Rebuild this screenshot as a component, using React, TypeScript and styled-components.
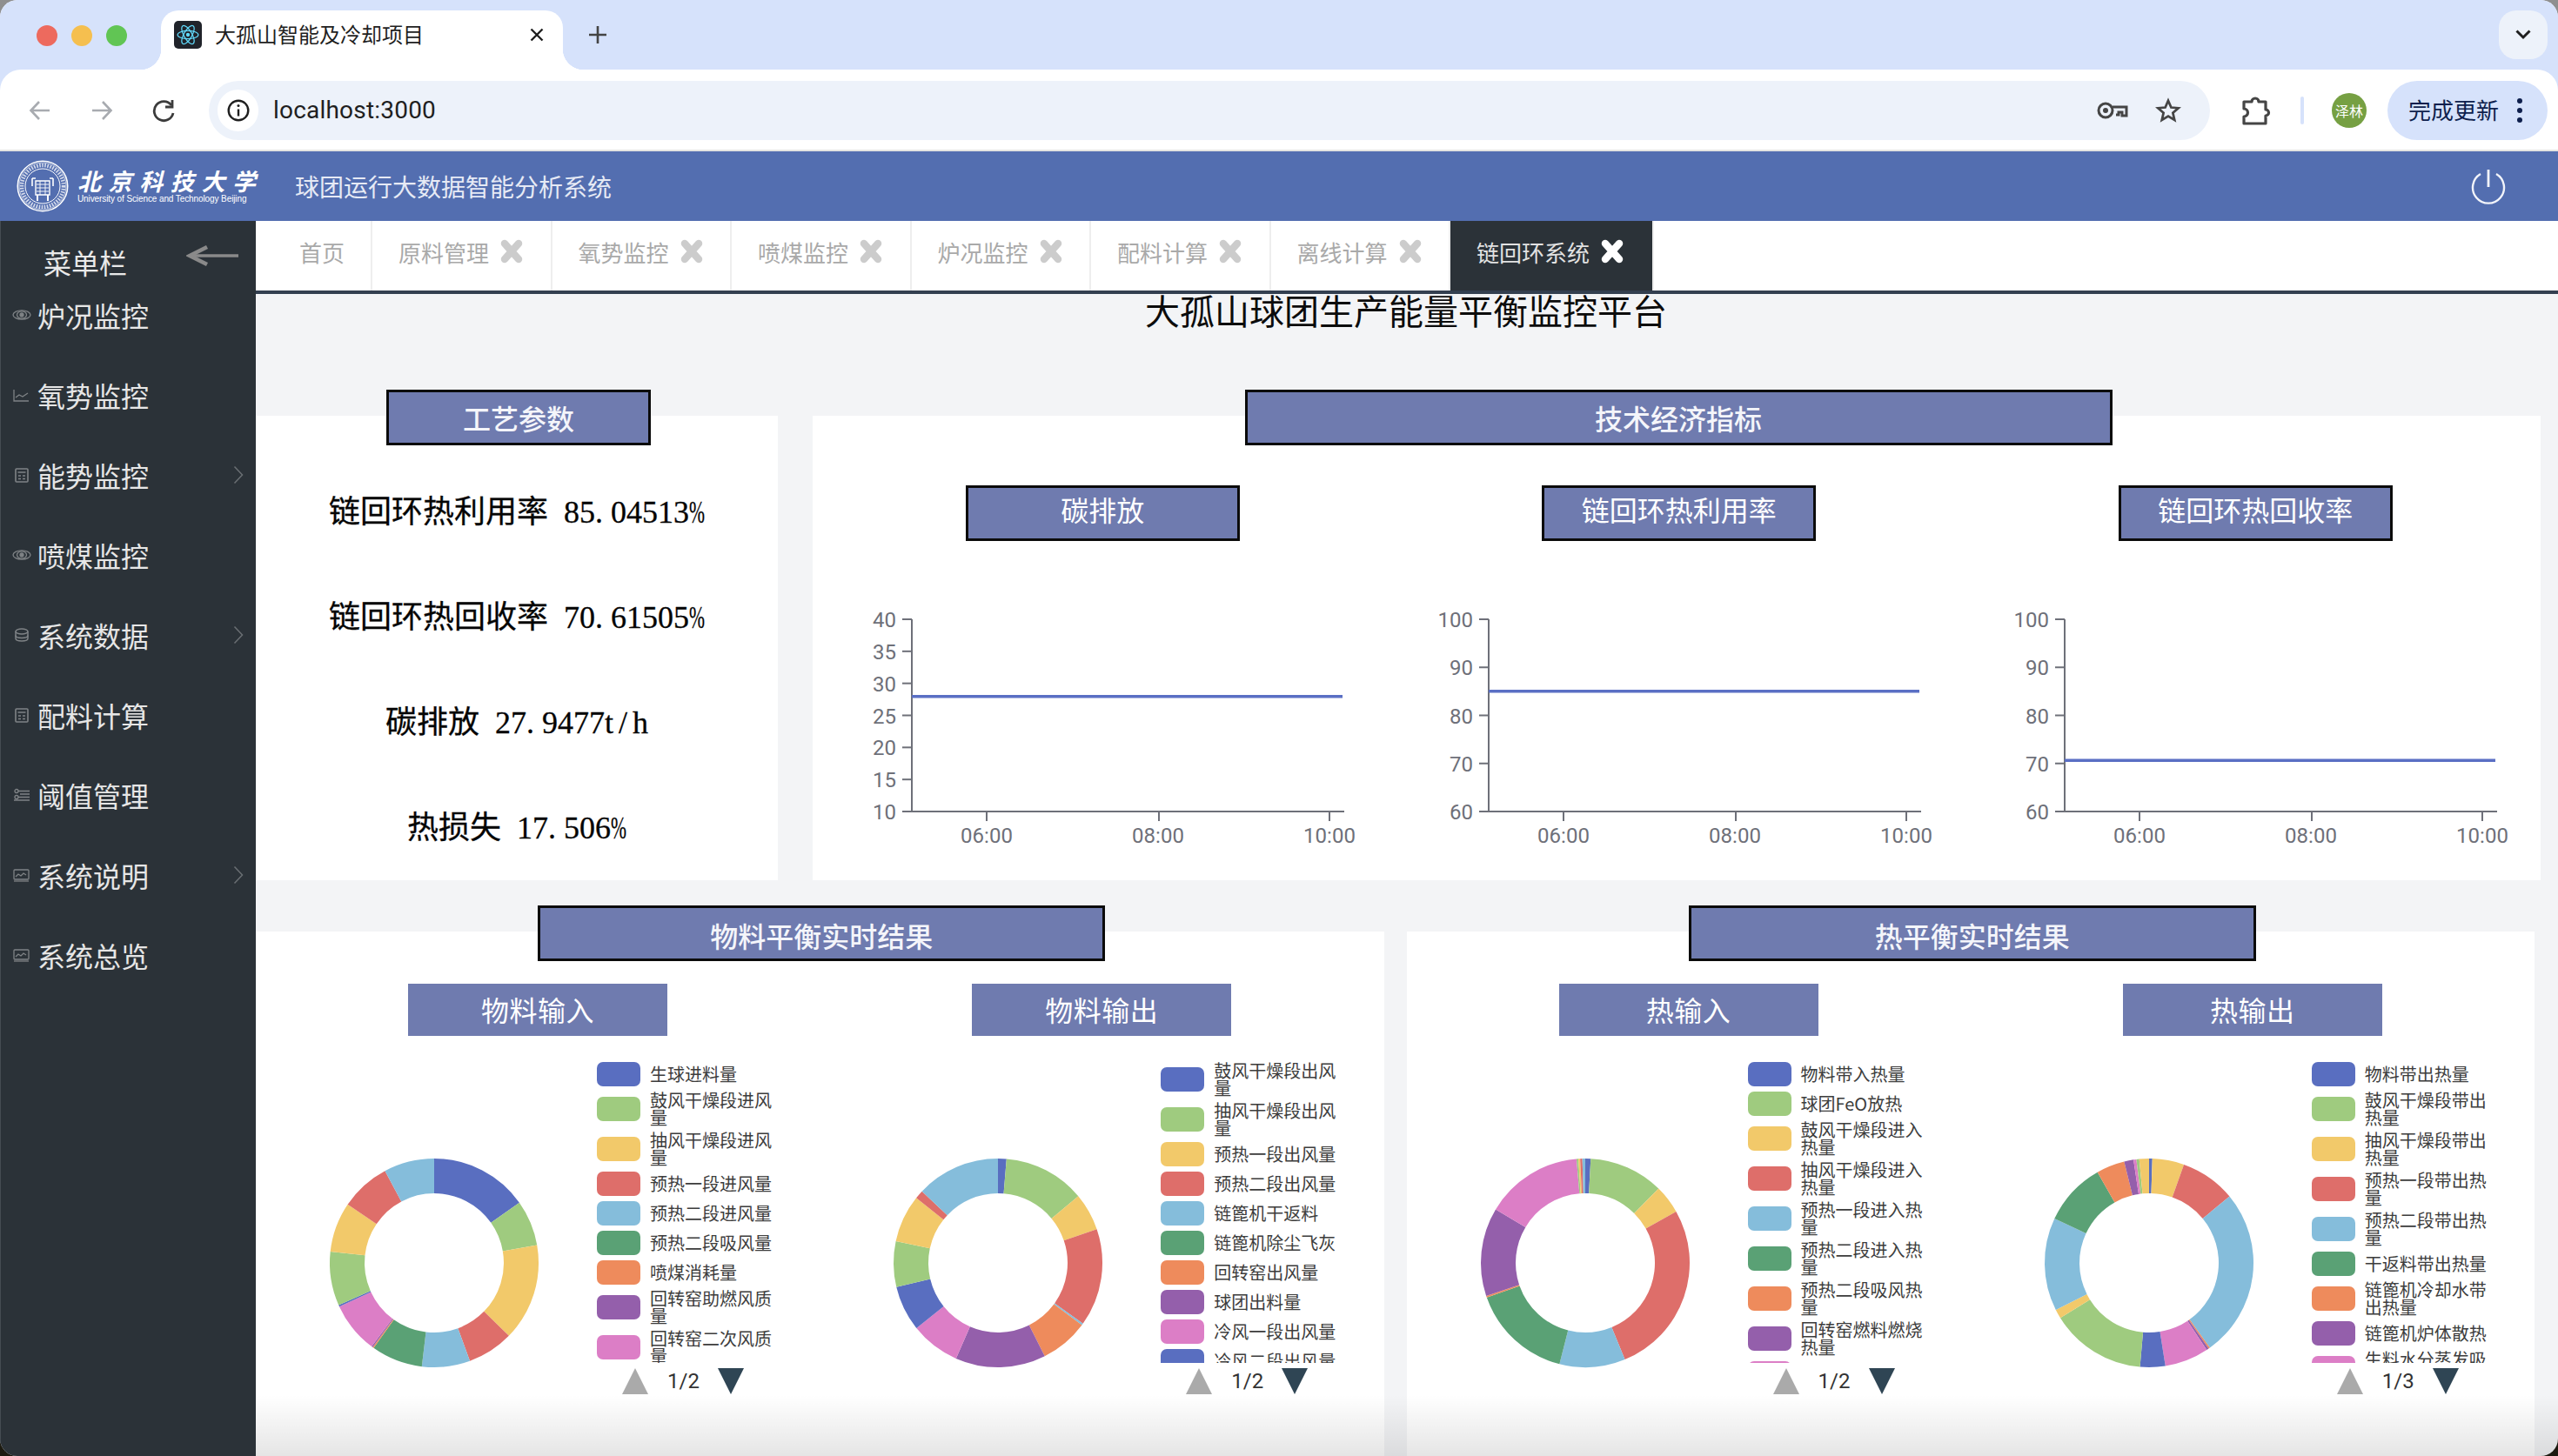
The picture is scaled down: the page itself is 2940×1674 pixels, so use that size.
import React from 'react';
import styled, { createGlobalStyle } from 'styled-components';

const Global = createGlobalStyle`
  html, body { margin: 0; padding: 0; background: linear-gradient(to bottom, #8f8f8f 0, #8f8f8f 40px, #1c1a10 1600px); height: 1674px; overflow: hidden; }
  * { box-sizing: border-box; }
  body { font-family: "Noto Sans CJK SC", Roboto, sans-serif; }
`;

const Page = styled.div`
  position: relative;
  width: 2940px;
  height: 1674px;
  overflow: hidden;
  border-radius: 20px;
  display: flex;
  flex-direction: column;
  background: #f3f4f6;
`;

/* ---------- browser chrome ---------- */
const TabStrip = styled.div`
  height: 80px;
  flex: none;
  background: #d6e2fb;
  display: flex;
  align-items: flex-start;
  padding-left: 42px;
`;
const Lights = styled.div`
  display: flex;
  gap: 16px;
  margin-top: 29px;
`;
const Light = styled.span<{ $c: string }>`
  width: 24px;
  height: 24px;
  border-radius: 50%;
  background: ${p => p.$c};
`;
const BrowserTab = styled.div`
  position: relative;
  margin: 12px 0 0 39px;
  width: 462px;
  height: 68px;
  background: #fff;
  border-radius: 20px 20px 0 0;
  display: flex;
  align-items: center;
  padding: 0 22px 12px 15px;
  &::before, &::after {
    content: '';
    position: absolute;
    bottom: 0;
    width: 24px;
    height: 24px;
  }
  &::before { left: -24px; background: radial-gradient(circle at 0 0, transparent 24px, #fff 24.5px); }
  &::after { right: -24px; background: radial-gradient(circle at 100% 0, transparent 24px, #fff 24.5px); }
`;
const Favicon = styled.span`
  width: 32px;
  height: 32px;
  border-radius: 5px;
  background: #20232a;
  display: flex;
  align-items: center;
  justify-content: center;
  flex: none;
`;
const BrowserTabTitle = styled.span`
  margin: 0 0 2px 15px;
  font-size: 24px;
  line-height: 30px;
  color: #1f1f1f;
  flex: 1;
`;
const IconCell = styled.span<{ $w?: number }>`
  width: ${p => p.$w ?? 36}px;
  height: 36px;
  flex: none;
  display: flex;
  align-items: center;
  justify-content: center;
`;
const PlusCell = styled(IconCell)`
  margin: 22px 0 0 22px;
`;
const ChevronChip = styled.span`
  margin: 12px 12px 0 auto;
  width: 56px;
  height: 56px;
  border-radius: 20px;
  background: #edf2fa;
  display: flex;
  align-items: center;
  justify-content: center;
`;
const Toolbar = styled.div`
  height: 94px;
  flex: none;
  background: #fff;
  border-radius: 24px 24px 0 0;
  border-bottom: 2px solid #e4e4e2;
  display: flex;
  align-items: center;
  padding: 2px 12px 0 10px;
`;
const ToolbarBack = styled.div`
  background: #d6e2fb;
  flex: none;
`;
const NavCell = styled.span`
  width: 71px;
  height: 40px;
  display: flex;
  align-items: center;
  justify-content: center;
  flex: none;
`;
const Address = styled.div`
  margin-left: 17px;
  flex: 1;
  height: 68px;
  border-radius: 34px;
  background: #edf2fa;
  display: flex;
  align-items: center;
  padding: 0 33px 0 10px;
`;
const InfoChip = styled.span`
  width: 47px;
  height: 48px;
  border-radius: 24px;
  background: #fff;
  display: flex;
  align-items: center;
  justify-content: center;
  flex: none;
`;
const Url = styled.span`
  margin-left: 17px;
  font: 28px/34px Roboto, sans-serif;
  letter-spacing: 0.2px;
  color: #1f1f1f;
  flex: 1;
`;
const KeyCell = styled(IconCell)`
  margin-right: 31px;
`;
const PuzzleCell = styled(IconCell)`
  margin-left: 35px;
`;
const Sep = styled.span`
  margin-left: 33px;
  width: 4px;
  height: 32px;
  border-radius: 2px;
  background: #d6e2fb;
  flex: none;
`;
const Avatar = styled.span`
  margin-left: 32px;
  width: 40px;
  height: 40px;
  border-radius: 50%;
  background: #76a043;
  color: #fff;
  font-size: 16px;
  display: flex;
  align-items: center;
  justify-content: center;
  flex: none;
`;
const UpdatePill = styled.div`
  margin-left: 24px;
  width: 184px;
  height: 68px;
  border-radius: 34px;
  background: #d6e2fb;
  color: #0e1f4d;
  font-size: 26px;
  display: flex;
  align-items: center;
  padding: 0 0 3px 24px;
  flex: none;
`;
const Dots = styled.span`
  margin: 3px 0 0 21px;
  display: flex;
  flex-direction: column;
  gap: 5px;
`;
const Dot = styled.i`
  width: 6px;
  height: 6px;
  border-radius: 50%;
  background: #0e1f4d;
`;

/* ---------- app header ---------- */
const Header = styled.header`
  height: 80px;
  flex: none;
  background: #536eb0;
  display: flex;
  align-items: center;
  padding: 0 60px 0 19px;
`;
const Brand = styled.div`
  margin-left: 10px;
  width: 210px;
  color: #fff;
  display: flex;
  flex-direction: column;
`;
const BrandCn = styled.span`
  font-size: 27px;
  line-height: 30px;
  font-weight: 700;
  font-style: italic;
  letter-spacing: 8.6px;
  white-space: nowrap;
`;
const BrandEn = styled.span`
  font: 10px/12px "Liberation Sans", Arial, sans-serif;
  white-space: nowrap;
  letter-spacing: -0.1px;
`;
const SystemName = styled.span`
  margin-left: 40px;
  font-size: 28px;
  color: #e6eaf5;
  flex: 1;
`;

/* ---------- body ---------- */
const Body = styled.div`
  flex: 1;
  min-height: 0;
  display: flex;
  position: relative;
`;
const Sidebar = styled.aside`
  width: 294px;
  flex: none;
  background: #2b3238;
  border-left: 1px solid #454c52;
`;
const SideHead = styled.div`
  height: 62px;
  display: flex;
  align-items: flex-start;
  padding: 28px 20px 0 49px;
`;
const SideHeadText = styled.span`
  font-size: 32px;
  line-height: 38px;
  color: #e9e9e9;
`;
const BackArrow = styled.svg`
  margin: 0 0 0 auto;
  flex: none;
`;
const Menu = styled.nav`
  display: flex;
  flex-direction: column;
`;
const MenuItem = styled.div`
  height: 92px;
  display: flex;
  align-items: center;
  padding: 0 14px 0 13px;
  color: #e6e6e6;
  font-size: 32px;
`;
const MenuIconBox = styled.span`
  width: 22px;
  height: 20px;
  display: flex;
  align-items: center;
  justify-content: center;
  margin-right: 7px;
  flex: none;
`;
const MenuChevron = styled.svg`
  margin-left: auto;
`;
const Main = styled.main`
  flex: 1;
  min-width: 0;
  display: flex;
  flex-direction: column;
  overflow: hidden;
`;
const TabsBar = styled.div`
  height: 84px;
  flex: none;
  background: #fff;
  border-bottom: 4px solid #333f50;
  display: flex;
`;
const PageTab = styled.div<{ $active?: boolean; $first?: boolean }>`
  height: 80px;
  display: flex;
  align-items: center;
  padding: 0 ${p => (p.$active ? 32 : p.$first ? 30 : 30.5)}px 10px ${p => (p.$first ? 50 : 30)}px;
  gap: 12px;
  font-size: 26px;
  color: ${p => (p.$active ? '#e2e2e2' : '#a9a9a9')};
  background: ${p => (p.$active ? '#2b3238' : '#fff')};
  border-right: 2px solid #eeeeee;
  svg { color: ${p => (p.$active ? '#fff' : '#cccccc')}; flex: none; }
`;
const Content = styled.div`
  flex: 1;
  min-height: 0;
`;
const PageTitle = styled.h1`
  margin: 0;
  height: 40px;
  font-size: 40px;
  line-height: 36px;
  font-weight: 400;
  text-align: center;
  color: #0c0c0c;
  width: 2644px;
`;
const TopRow = styled.div`
  margin-top: 100px;
  display: flex;
  gap: 40px;
  padding-right: 20px;
  height: 534px;
`;
const BottomRow = styled.div`
  margin-top: 59px;
  display: flex;
  gap: 26px;
  padding-right: 27px;
`;
const Card = styled.section<{ $w?: number }>`
  background: #fff;
  ${p => (p.$w ? `width: ${p.$w}px; flex: none;` : 'flex: 1; min-width: 0;')}
`;
const SectionTitle = styled.div<{ $w: number; $low?: boolean }>`
  width: ${p => p.$w}px;
  height: 64px;
  margin: -30px 0 0 calc(50% - ${p => p.$w / 2}px + 2px);
  padding-top: ${p => (p.$low ? 3 : 0)}px;
  border: 3px solid #0b0b0b;
  background: #6f7baf;
  color: #f4f5fa;
  font-size: 32px;
  font-weight: 500;
  display: flex;
  align-items: center;
  justify-content: center;
`;
const Params = styled.div`
  margin-top: 16px;
  display: flex;
  flex-direction: column;
`;
const ParamRow = styled.div`
  height: 121px;
  display: flex;
  align-items: center;
  justify-content: center;
  font: 36px/1 "Liberation Serif", "Noto Sans CJK SC", serif;
  color: #050505;
  white-space: pre;
  -webkit-text-stroke: 0.3px #050505;
`;
const ParamValue = styled.span`
  margin-left: 18px;
`;
const WideDot = styled.span`
  letter-spacing: 9px;
`;
const WideLetters = styled.span`
  letter-spacing: 6px;
`;
const Percent = styled.span`
  display: inline-block;
  width: 18px;
  transform: scaleX(0.6);
  transform-origin: left center;
`;
const ChartGrid = styled.div`
  margin: 46px 0 0 2px;
  display: grid;
  grid-template-columns: repeat(3, 662.5px);
`;
const ChartCol = styled.div`
  display: flex;
  flex-direction: column;
  align-items: center;
`;
const ChartTitle = styled.div`
  width: 315px;
  height: 64px;
  border: 3px solid #0b0b0b;
  background: #6f7baf;
  color: #fff;
  font-size: 32px;
  display: flex;
  align-items: center;
  justify-content: center;
  padding-bottom: 10px;
`;
const ChartSvg = styled.svg`
  margin-top: 68px;
  align-self: flex-start;
  display: block;
`;
const PieColumns = styled.div`
  display: grid;
  grid-template-columns: 1fr 1fr;
  margin-top: 26px;
`;
const PieCol = styled.div`
  display: flex;
  flex-direction: column;
  min-width: 0;
`;
const PieTitle = styled.div`
  align-self: center;
  width: 298px;
  height: 60px;
  background: #6f7baf;
  color: #fff;
  font-size: 32px;
  letter-spacing: 0.5px;
  display: flex;
  align-items: center;
  justify-content: center;
  padding-bottom: 2px;
`;
const PieBody = styled.div`
  display: grid;
  grid-template-columns: 392px 1fr;
`;
const DonutSvg = styled.svg`
  display: block;
`;
const LegendWrap = styled.div`
  margin-top: 30px;
  display: flex;
  flex-direction: column;
`;
const LegendClip = styled.div`
  height: 346px;
  overflow: hidden;
  display: flex;
  flex-direction: column;
  gap: 6px;
`;
const LegendRow = styled.div`
  min-height: 28px;
  flex: none;
  display: flex;
  align-items: center;
  gap: 11px;
`;
const Swatch = styled.span<{ $c: string }>`
  width: 50px;
  height: 28px;
  border-radius: 7px;
  background: ${p => p.$c};
  flex: none;
`;
const LegendLabel = styled.span`
  width: 141px;
  font-size: 20px;
  line-height: 20px;
  color: #3d3d3d;
`;
const Pager = styled.div`
  margin-top: 6px;
  padding-left: 29px;
  display: flex;
  align-items: center;
  gap: 22px;
  height: 30px;
`;
const Triangle = styled.span<{ $down?: boolean }>`
  width: 0;
  height: 0;
  border-left: 15px solid transparent;
  border-right: 15px solid transparent;
  ${p => (p.$down ? 'border-top: 30px solid #2f4554;' : 'border-bottom: 30px solid #aaaaaa;')}
`;
const PagerText = styled.span`
  width: 36px;
  font: 24px/30px Roboto, sans-serif;
  color: #333;
  white-space: nowrap;
`;
const BottomFade = styled.div`
  position: absolute;
  left: 294px;
  right: 0;
  bottom: 0;
  height: 70px;
  pointer-events: none;
  background: linear-gradient(to bottom, rgba(0, 0, 0, 0), rgba(0, 0, 0, 0.1));
`;

/* ---------- icons ---------- */
const Gray = '#7f8386';
const SideIcon: React.FC<{ kind: string }> = ({ kind }) => {
  const s = { fill: 'none', stroke: Gray, strokeWidth: 1.3 };
  return (
    <svg width="22" height="18" viewBox="0 0 22 18">
      {kind === 'eye' && (
        <g {...s}>
          <ellipse cx="11" cy="9" rx="10" ry="5.2" />
          <ellipse cx="11" cy="9" rx="5.5" ry="4.2" />
          <circle cx="11" cy="9" r="2" fill={Gray} />
        </g>
      )}
      {kind === 'chart' && (
        <g {...s}>
          <path d="M2 3v13h17" />
          <path d="M4 12l4-3 4 2 6-4" />
        </g>
      )}
      {kind === 'calc' && (
        <g {...s} strokeWidth={1.6}>
          <rect x="4" y="2" width="14" height="15" rx="1" />
          <path d="M6.5 6h9M7 10h3M12 10h3M7 13.5h3M12 13.5h3" />
        </g>
      )}
      {kind === 'db' && (
        <g {...s} strokeWidth={1.5}>
          <ellipse cx="11" cy="5" rx="7" ry="3" />
          <path d="M4 5v8c0 1.7 3 3 7 3s7-1.3 7-3V5" />
          <path d="M4 9.500c0 1.700 3 3 7 3s7-1.300 7-3" />
        </g>
      )}
      {kind === 'slider' && (
        <g {...s}>
          <circle cx="5" cy="4.500" r="2" />
          <circle cx="5" cy="11.500" r="2" />
          <path d="M7 4.500h13M9 8h11M7 11.500h13M2 15h18" />
        </g>
      )}
      {kind === 'monitor' && (
        <g {...s}>
          <rect x="2" y="3" width="17" height="11" rx="1" />
          <path d="M4 11l3-3 3 2 3-3 3 2" />
          <path d="M2 16h17" />
        </g>
      )}
    </svg>
  );
};

const Chevron = () => (
  <MenuChevron width="12" height="22" viewBox="0 0 12 22">
    <path d="M1.500 1.500l9 9.500-9 9.500" fill="none" stroke="#6a6f73" strokeWidth="1.500" />
  </MenuChevron>
);

const TabClose = () => (
  <svg width="28" height="28" viewBox="0 0 28 28" stroke="currentColor" strokeWidth="8.500" strokeLinecap="round">
    <path d="M6 5l16 18M22 5L6 23" />
  </svg>
);

const LogoMark = () => (
  <svg width="60" height="60" viewBox="0 0 60 60">
    <g fill="none" stroke="#fff">
      <circle cx="30" cy="30" r="28.700" strokeWidth="1.600" />
      <circle cx="30" cy="30" r="27" strokeWidth="0.600" />
      <circle cx="30" cy="30" r="20" strokeWidth="1" />
      <circle cx="30" cy="30" r="24" strokeWidth="4.500" strokeDasharray="1.600 1.500" opacity="0.75" />
      <path d="M18 21v9M42 21v9M18 21h4M38 21h4" strokeWidth="1.600" />
      <path d="M22 24h16v16H22z" strokeWidth="1.400" />
      <path d="M23 28h14M23 32h14M23 36h14M27 24v16M33 24v16" strokeWidth="0.900" />
      <path d="M24 40v7M36 40v7" strokeWidth="2" />
    </g>
  </svg>
);

/* ---------- data ---------- */
const palette = ['#596ec0', '#9fcb7f', '#f2c96a', '#de6e6a', '#85bddb', '#5aa175', '#ee8b5c', '#945fab', '#dc7ec6'];

type Slice = [number, number];
const polar = (r: number, a: number) => {
  const t = ((a - 90) * Math.PI) / 180;
  return [205 + r * Math.cos(t), 261 + r * Math.sin(t)];
};
const arc = (from: number, to: number) => {
  const R = 120;
  const r = 80;
  const [x1, y1] = polar(R, from);
  const [x2, y2] = polar(R, to);
  const [x3, y3] = polar(r, to);
  const [x4, y4] = polar(r, from);
  const large = to - from > 180 ? 1 : 0;
  return `M${x1} ${y1}A${R} ${R} 0 ${large} 1 ${x2} ${y2}L${x3} ${y3}A${r} ${r} 0 ${large} 0 ${x4} ${y4}Z`;
};

const Donut: React.FC<{ slices: Slice[] }> = ({ slices }) => (
  <DonutSvg width="392" height="522" viewBox="0 0 392 522">
    {slices.map(([c, end], i) => (
      <path key={i} d={arc(i ? slices[i - 1][1] : 0, end)} fill={palette[c]} />
    ))}
  </DonutSvg>
);

const pies = [
  {
    title: '物料输入',
    page: '1/2',
    items: ['生球进料量', '鼓风干燥段进风量', '抽风干燥段进风量', '预热一段进风量', '预热二段进风量', '预热二段吸风量', '喷煤消耗量', '回转窑助燃风质量', '回转窑二次风质量'],
    slices: [[0, 54.7], [1, 80.2], [2, 134.3], [3, 160], [4, 186.8], [5, 215.4], [6, 216.1], [7, 216.8], [8, 245.3], [0, 246.2], [1, 276.2], [2, 304.1], [3, 331.9], [4, 360]] as Slice[],
  },
  {
    title: '物料输出',
    page: '1/2',
    items: ['鼓风干燥段出风量', '抽风干燥段出风量', '预热一段出风量', '预热二段出风量', '链篦机干返料', '链篦机除尘飞灰', '回转窑出风量', '球团出料量', '冷风一段出风量', '冷风二段出风量'],
    slices: [[0, 4.7], [1, 50.3], [2, 71.2], [3, 125.5], [4, 126.5], [6, 153.4], [7, 203.7], [8, 231.3], [0, 256.6], [1, 282], [2, 308.5], [3, 313.3], [4, 360]] as Slice[],
  },
  {
    title: '热输入',
    page: '1/2',
    items: ['物料带入热量', '球团FeO放热', '鼓风干燥段进入热量', '抽风干燥段进入热量', '预热一段进入热量', '预热二段进入热量', '预热二段吸风热量', '回转窑燃料燃烧热量', '助燃风带入热量'],
    slices: [[0, 3], [1, 44.6], [2, 60.5], [3, 157.7], [4, 194.3], [5, 250.6], [6, 251.6], [7, 300.9], [8, 355.2], [1, 356.2], [2, 357.2], [3, 358.4], [4, 360]] as Slice[],
  },
  {
    title: '热输出',
    page: '1/3',
    items: ['物料带出热量', '鼓风干燥段带出热量', '抽风干燥段带出热量', '预热一段带出热量', '预热二段带出热量', '干返料带出热量', '链篦机冷却水带出热量', '链篦机炉体散热', '生料水分蒸发吸热'],
    slices: [[0, 1.8], [2, 19.5], [3, 50.4], [4, 144.4], [6, 145.2], [7, 146.5], [8, 171], [0, 185], [1, 238.2], [2, 243.3], [4, 295.1], [5, 330.4], [6, 346.2], [7, 351.4], [8, 353], [1, 354.6], [2, 360]] as Slice[],
  },
];

const PieBlock: React.FC<{ p: (typeof pies)[number] }> = ({ p }) => (
  <PieCol>
    <PieTitle>{p.title}</PieTitle>
    <PieBody>
      <Donut slices={p.slices} />
      <LegendWrap>
        <LegendClip>
          {p.items.map((t, i) => (
            <LegendRow key={t}>
              <Swatch $c={palette[i % 9]} />
              <LegendLabel>{t}</LegendLabel>
            </LegendRow>
          ))}
        </LegendClip>
        <Pager>
          <Triangle />
          <PagerText>{p.page}</PagerText>
          <Triangle $down />
        </Pager>
      </LegendWrap>
    </PieBody>
  </PieCol>
);

const lines = [
  { title: '碳排放', min: 10, max: 40, step: 5, value: 27.9477 },
  { title: '链回环热利用率', min: 60, max: 100, step: 10, value: 85.04513 },
  { title: '链回环热回收率', min: 60, max: 100, step: 10, value: 70.61505 },
];
const axisColor = '#6e7079';

const LineChart: React.FC<{ l: (typeof lines)[number] }> = ({ l }) => {
  const top = 22;
  const bottom = 243;
  const y = (v: number) => bottom - ((v - l.min) / (l.max - l.min)) * (bottom - top);
  const ticks: number[] = [];
  for (let v = l.min; v <= l.max; v += l.step) ticks.push(v);
  return (
    <ChartSvg width="663" height="290" viewBox="2 0 663 290">
      <g stroke={axisColor} strokeWidth="2" fill="none">
        <path d={`M114 ${top}V${bottom}M103 ${bottom}H611`} />
        {ticks.map(v => (
          <path key={v} d={`M103 ${y(v)}H114`} />
        ))}
        {[200, 398, 594].map(x => (
          <path key={x} d={`M${x} ${bottom}v11`} />
        ))}
      </g>
      <path d={`M114 ${y(l.value)}H609`} stroke="#5a6fc4" strokeWidth="3.500" fill="none" />
      <g fill={axisColor} fontFamily="Roboto, sans-serif" fontSize="24">
        {ticks.map(v => (
          <text key={v} x="96" y={y(v) + 9} textAnchor="end">
            {v}
          </text>
        ))}
        {[
          [200, '06:00'],
          [397, '08:00'],
          [594, '10:00'],
        ].map(([x, t]) => (
          <text key={t} x={x} y="279" textAnchor="middle">
            {t}
          </text>
        ))}
      </g>
    </ChartSvg>
  );
};

const tabs = ['原料管理', '氧势监控', '喷煤监控', '炉况监控', '配料计算', '离线计算'];
const menu: [string, string, boolean?][] = [
  ['eye', '炉况监控'],
  ['chart', '氧势监控'],
  ['calc', '能势监控', true],
  ['eye', '喷煤监控'],
  ['db', '系统数据', true],
  ['calc', '配料计算'],
  ['slider', '阈值管理'],
  ['monitor', '系统说明', true],
  ['monitor', '系统总览'],
];
const params: [string, React.ReactNode][] = [
  ['链回环热利用率', <>85<WideDot>.</WideDot>04513<Percent>%</Percent></>],
  ['链回环热回收率', <>70<WideDot>.</WideDot>61505<Percent>%</Percent></>],
  ['碳排放', <>27<WideDot>.</WideDot>9477<WideLetters>t/</WideLetters>h</>],
  ['热损失', <>17<WideDot>.</WideDot>506<Percent>%</Percent></>],
];

export default function App() {
  return (
    <Page>
      <Global />
      <TabStrip>
        <Lights>
          <Light $c="#ed6a5e" />
          <Light $c="#f5bf4f" />
          <Light $c="#61c554" />
        </Lights>
        <BrowserTab>
          <Favicon>
            <svg width="26" height="26" viewBox="-12 -12 24 24" fill="none" stroke="#61dafb" strokeWidth="1.100">
              <ellipse rx="11" ry="4.300" />
              <ellipse rx="11" ry="4.300" transform="rotate(60)" />
              <ellipse rx="11" ry="4.300" transform="rotate(120)" />
              <circle r="2" fill="#61dafb" stroke="none" />
            </svg>
          </Favicon>
          <BrowserTabTitle>大孤山智能及冷却项目</BrowserTabTitle>
          <svg width="16" height="16" viewBox="0 0 16 16" stroke="#1f1f1f" strokeWidth="2.400">
            <path d="M1.500 1.500l13 13M14.500 1.500l-13 13" />
          </svg>
        </BrowserTab>
        <PlusCell>
          <svg width="20" height="20" viewBox="0 0 20 20" stroke="#444" strokeWidth="2.600">
            <path d="M10 0v20M0 10h20" />
          </svg>
        </PlusCell>
        <ChevronChip>
          <svg width="18" height="12" viewBox="0 0 18 12" fill="none" stroke="#1f1f1f" strokeWidth="3">
            <path d="M1.500 1.500L9 9l7.500-7.500" />
          </svg>
        </ChevronChip>
      </TabStrip>
      <ToolbarBack>
        <Toolbar>
          <NavCell>
            <svg width="26" height="24" viewBox="0 0 26 24" fill="none" stroke="#a8abb0" strokeWidth="2.600">
              <path d="M24 12H3M12 2L2.500 12 12 22" />
            </svg>
          </NavCell>
          <NavCell>
            <svg width="26" height="24" viewBox="0 0 26 24" fill="none" stroke="#a8abb0" strokeWidth="2.600">
              <path d="M2 12h21M14 2l9.500 10L14 22" />
            </svg>
          </NavCell>
          <NavCell>
            <svg width="28" height="28" viewBox="0 0 28 28" fill="none" stroke="#3c3c3c" strokeWidth="2.800">
              <path d="M23 8a11 11 0 1 0 2 9" />
              <path d="M24 2v8h-8" />
            </svg>
          </NavCell>
          <Address>
            <InfoChip>
              <svg width="26" height="26" viewBox="0 0 26 26" fill="none" stroke="#1f1f1f" strokeWidth="2.400">
                <circle cx="13" cy="13" r="11.300" />
                <path d="M13 11.500v8" />
                <circle cx="13" cy="7.500" r="1.500" fill="#1f1f1f" stroke="none" />
              </svg>
            </InfoChip>
            <Url>localhost:3000</Url>
            <KeyCell>
              <svg width="36" height="24" viewBox="0 0 36 24" fill="none" stroke="#454545" strokeWidth="3">
                <circle cx="10" cy="12" r="8" />
                <circle cx="10" cy="12" r="3" fill="#454545" stroke="none" />
                <path d="M18 8h16v10h-5v-4h-4v3h-3" />
              </svg>
            </KeyCell>
            <IconCell $w={30}>
              <svg width="32" height="32" viewBox="0 0 24 24" fill="none" stroke="#454545" strokeWidth="2.200">
                <path d="M12 3l2.700 6.200 6.700.6-5.100 4.400 1.500 6.600L12 17.300l-5.800 3.500 1.500-6.600-5.100-4.400 6.700-.6z" />
              </svg>
            </IconCell>
          </Address>
          <PuzzleCell>
            <svg width="34" height="36" viewBox="0 0 34 36" fill="none" stroke="#454545" strokeWidth="3.200">
              <path d="M3 8h9a4 4 0 0 1 8 0h8v9a3.500 3.500 0 0 1 0 7v9H3v-8a4 4 0 0 0 0-9z" strokeLinejoin="round" />
            </svg>
          </PuzzleCell>
          <Sep />
          <Avatar>泽林</Avatar>
          <UpdatePill>
            完成更新
            <Dots>
              <Dot />
              <Dot />
              <Dot />
            </Dots>
          </UpdatePill>
        </Toolbar>
      </ToolbarBack>
      <Header>
        <LogoMark />
        <Brand>
          <BrandCn>北京科技大学</BrandCn>
          <BrandEn>University of Science and Technology Beijing</BrandEn>
        </Brand>
        <SystemName>球团运行大数据智能分析系统</SystemName>
        <svg width="40" height="42" viewBox="0 0 40 42" fill="none" stroke="#f2f4fa" strokeWidth="2.400">
          <path d="M11 7a18 18 0 1 0 18 0" />
          <path d="M20 2v20" strokeWidth="2.800" />
        </svg>
      </Header>
      <Body>
        <Sidebar>
          <SideHead>
            <SideHeadText>菜单栏</SideHeadText>
            <BackArrow width="60" height="24" viewBox="0 0 60 24" fill="none" stroke="#8a8a8a">
              <path d="M6 12h54" strokeWidth="3.500" />
              <path d="M24 2L4 12l20 10" strokeWidth="4.500" />
            </BackArrow>
          </SideHead>
          <Menu>
            {menu.map(([k, t, more]) => (
              <MenuItem key={t}>
                <MenuIconBox>
                  <SideIcon kind={k} />
                </MenuIconBox>
                {t}
                {more && <Chevron />}
              </MenuItem>
            ))}
          </Menu>
        </Sidebar>
        <Main>
          <TabsBar>
            <PageTab $first>首页</PageTab>
            {tabs.map(t => (
              <PageTab key={t}>
                {t}
                <TabClose />
              </PageTab>
            ))}
            <PageTab $active>
              链回环系统
              <TabClose />
            </PageTab>
          </TabsBar>
          <Content>
            <PageTitle>大孤山球团生产能量平衡监控平台</PageTitle>
            <TopRow>
              <Card $w={600}>
                <SectionTitle $w={304}>工艺参数</SectionTitle>
                <Params>
                  {params.map(([k, v]) => (
                    <ParamRow key={k}>
                      {k}
                      <ParamValue>{v}</ParamValue>
                    </ParamRow>
                  ))}
                </Params>
              </Card>
              <Card>
                <SectionTitle $w={997}>技术经济指标</SectionTitle>
                <ChartGrid>
                  {lines.map(l => (
                    <ChartCol key={l.title}>
                      <ChartTitle>{l.title}</ChartTitle>
                      <LineChart l={l} />
                    </ChartCol>
                  ))}
                </ChartGrid>
              </Card>
            </TopRow>
            <BottomRow>
              <Card>
                <SectionTitle $w={652} $low>物料平衡实时结果</SectionTitle>
                <PieColumns>
                  <PieBlock p={pies[0]} />
                  <PieBlock p={pies[1]} />
                </PieColumns>
              </Card>
              <Card>
                <SectionTitle $w={652} $low>热平衡实时结果</SectionTitle>
                <PieColumns>
                  <PieBlock p={pies[2]} />
                  <PieBlock p={pies[3]} />
                </PieColumns>
              </Card>
            </BottomRow>
          </Content>
        </Main>
        <BottomFade />
      </Body>
    </Page>
  );
}
